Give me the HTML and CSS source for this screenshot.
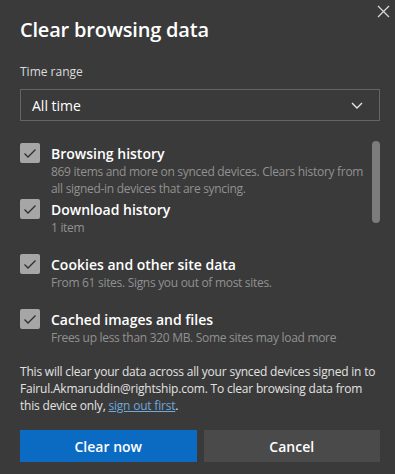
FILE: index.html
```html
<!DOCTYPE html>
<html lang="en">
<head>
  <meta charset="UTF-8">
  <meta name="viewport" content="width=device-width, initial-scale=1.0">
  <title>Clear browsing data</title>
  <link rel="stylesheet" href="styles.css">
</head>
<body>
  <div class="dialog">
    <button class="close" aria-label="Close">
      <svg width="13" height="13" viewBox="0 0 13 13"><path d="M1 1 L12 12 M12 1 L1 12" stroke="#d8d8d8" stroke-width="1.3" fill="none"/></svg>
    </button>
    <h1 class="title">Clear browsing data</h1>

    <div class="field">
      <label class="field-label">Time range</label>
      <div class="select">
        <span>All time</span>
        <svg width="12" height="7" viewBox="0 0 12 7"><path d="M1 1 L6 6 L11 1" stroke="#e6e6e6" stroke-width="1.4" fill="none"/></svg>
      </div>
    </div>

    <div class="list">
      <div class="items">
        <div class="item first">
          <span class="checkbox"><svg width="14" height="11" viewBox="0 0 14 11"><path d="M1.5 5.5 L5 9 L12.5 1.5" stroke="#2e2e2e" stroke-width="1.3" fill="none"/></svg></span>
          <div class="item-text">
            <div class="item-title">Browsing history</div>
            <div class="item-desc">869 items and more on synced devices. Clears history from all signed-in devices that are syncing.</div>
          </div>
        </div>
        <div class="item">
          <span class="checkbox"><svg width="14" height="11" viewBox="0 0 14 11"><path d="M1.5 5.5 L5 9 L12.5 1.5" stroke="#2e2e2e" stroke-width="1.3" fill="none"/></svg></span>
          <div class="item-text">
            <div class="item-title">Download history</div>
            <div class="item-desc">1 item</div>
          </div>
        </div>
        <div class="item">
          <span class="checkbox"><svg width="14" height="11" viewBox="0 0 14 11"><path d="M1.5 5.5 L5 9 L12.5 1.5" stroke="#2e2e2e" stroke-width="1.3" fill="none"/></svg></span>
          <div class="item-text">
            <div class="item-title">Cookies and other site data</div>
            <div class="item-desc">From 61 sites. Signs you out of most sites.</div>
          </div>
        </div>
        <div class="item">
          <span class="checkbox"><svg width="14" height="11" viewBox="0 0 14 11"><path d="M1.5 5.5 L5 9 L12.5 1.5" stroke="#2e2e2e" stroke-width="1.3" fill="none"/></svg></span>
          <div class="item-text">
            <div class="item-title">Cached images and files</div>
            <div class="item-desc nowrap">Frees up less than 320 MB. Some sites may load more</div>
          </div>
        </div>
      </div>
      <div class="scrollbar"><div class="thumb"></div></div>
    </div>

    <p class="note">This will clear your data across all your synced devices signed in to Fairul.Akmaruddin@rightship.com. To clear browsing data from this device only, <a href="#">sign out first</a>.</p>

    <div class="actions">
      <button class="btn primary">Clear now</button>
      <button class="btn">Cancel</button>
    </div>
  </div>
</body>
</html>
```

FILE: styles.css
```css
html, body {
  margin: 0;
  padding: 0;
}
body {
  font-family: 'Open Sans', 'Segoe UI', sans-serif;
  background-color: #3a3a3a;
  color: #fff;
  width: 395px;
  height: 474px;
  overflow: hidden;
}
.dialog {
  position: relative;
  display: flex;
  flex-direction: column;
  padding: 16px 15px 0 20px;
}
.close {
  position: absolute;
  top: 5px;
  right: 5px;
  background: none;
  border: none;
  padding: 0;
  width: 13px;
  height: 13px;
  display: flex;
}
.title {
  margin: 0;
  font-size: 20px;
  font-weight: 600;
  line-height: 28px;
  letter-spacing: -0.2px;
}
.field {
  margin-top: 20px;
  display: flex;
  flex-direction: column;
}
.field-label {
  font-size: 12px;
  line-height: 16px;
  color: #dcdcdc;
}
.select {
  margin-top: 9px;
  height: 30px;
  border: 1px solid #646464;
  display: flex;
  align-items: center;
  justify-content: space-between;
  padding: 0 16px 0 11px;
  font-size: 14px;
  font-weight: 500;
}
.list {
  margin-top: 24px;
  display: flex;
  align-items: flex-start;
  gap: 4px;
}
.items {
  flex: 1;
  display: flex;
  flex-direction: column;
}
.item {
  display: flex;
  align-items: flex-start;
  gap: 11px;
  margin-bottom: 20px;
}
.item.first {
  margin-bottom: 4px;
}
.checkbox {
  flex-shrink: 0;
  width: 20px;
  height: 20px;
  margin-top: -2px;
  border-radius: 2px;
  background-color: #a6a6a6;
  display: flex;
  align-items: center;
  justify-content: center;
}
.item-title {
  font-size: 14px;
  font-weight: 600;
  line-height: 18px;
}
.item-desc {
  font-size: 12px;
  line-height: 17px;
  letter-spacing: -0.3px;
  color: #919191;
}
.nowrap {
  white-space: nowrap;
}
.scrollbar {
  width: 8px;
  flex-shrink: 0;
  margin-top: -4px;
}
.thumb {
  height: 82px;
  border-radius: 4px;
  background-color: #7c7c7c;
}
.note {
  margin: 0;
  margin-top: -3px;
  font-size: 12px;
  line-height: 17px;
  letter-spacing: -0.2px;
  color: #e2e2e2;
}
.note a {
  color: #6fa8dc;
  text-decoration: underline;
}
.actions {
  margin-top: 16px;
  display: grid;
  grid-template-columns: 1fr 1fr;
  gap: 7px;
}
.btn {
  height: 32px;
  border: none;
  background-color: #4a4a4a;
  color: #fff;
  font-family: inherit;
  font-size: 14px;
  font-weight: 600;
}
.btn.primary {
  background-color: #0b6bc3;
}
```
